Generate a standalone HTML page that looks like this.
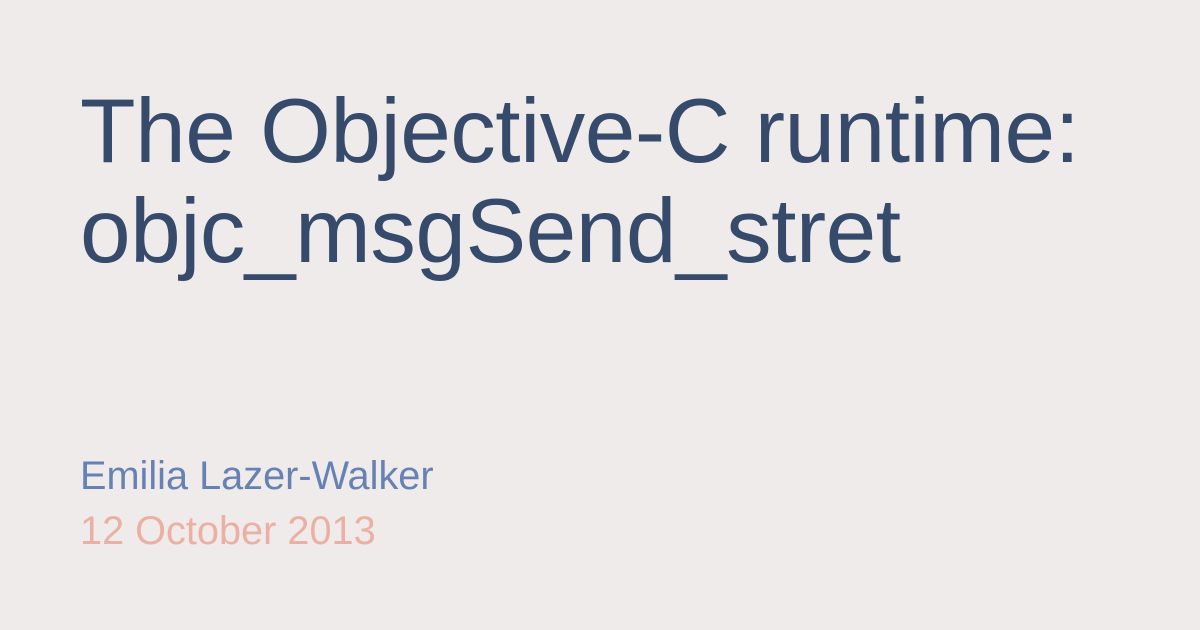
<!DOCTYPE html>
<html><head><style>
html,body{margin:0;padding:0}
body{width:1200px;height:630px;background:#efebea;font-family:"Liberation Sans",sans-serif;position:relative;overflow:hidden}
h1{position:absolute;left:80px;top:82px;margin:0;font-weight:normal;font-size:91px;line-height:100px;color:#364a6b;letter-spacing:-0.5px}
.a{position:absolute;left:80px;top:454px;font-size:39.7px;color:#6682b5}
.d{position:absolute;left:80px;top:509px;font-size:39.7px;color:#ebb0a3}
</style></head><body>
<h1>The Objective-C runtime:<br>objc_msgSend_stret</h1>
<div class="a">Emilia Lazer-Walker</div>
<div class="d">12 October 2013</div>
</body></html>
